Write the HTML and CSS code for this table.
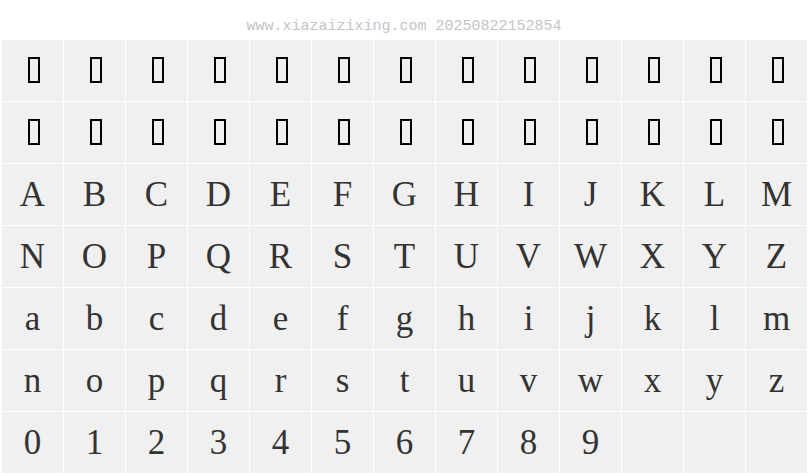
FILE: index.html
```html
<!DOCTYPE html>
<html>
    <head>
        <meta charset="UTF-8" />
        <meta name="viewport" content="width=device-width, initial-scale=1.0" />
        <title>Font Preview</title>
        <link rel="stylesheet" href="styles.css">
    </head>
    <body>
        <div class="stamp">www.xiazaizixing.com 20250822152854</div>

        <div class="charGrid">
            <!-- 缺字 -->
            <div class="cell"><span class="tofu"></span></div>
            <div class="cell"><span class="tofu"></span></div>
            <div class="cell"><span class="tofu"></span></div>
            <div class="cell"><span class="tofu"></span></div>
            <div class="cell"><span class="tofu"></span></div>
            <div class="cell"><span class="tofu"></span></div>
            <div class="cell"><span class="tofu"></span></div>
            <div class="cell"><span class="tofu"></span></div>
            <div class="cell"><span class="tofu"></span></div>
            <div class="cell"><span class="tofu"></span></div>
            <div class="cell"><span class="tofu"></span></div>
            <div class="cell"><span class="tofu"></span></div>
            <div class="cell"><span class="tofu"></span></div>
            <div class="cell"><span class="tofu"></span></div>
            <div class="cell"><span class="tofu"></span></div>
            <div class="cell"><span class="tofu"></span></div>
            <div class="cell"><span class="tofu"></span></div>
            <div class="cell"><span class="tofu"></span></div>
            <div class="cell"><span class="tofu"></span></div>
            <div class="cell"><span class="tofu"></span></div>
            <div class="cell"><span class="tofu"></span></div>
            <div class="cell"><span class="tofu"></span></div>
            <div class="cell"><span class="tofu"></span></div>
            <div class="cell"><span class="tofu"></span></div>
            <div class="cell"><span class="tofu"></span></div>
            <div class="cell"><span class="tofu"></span></div>

            <!-- 大寫 -->
            <div class="cell">A</div>
            <div class="cell">B</div>
            <div class="cell">C</div>
            <div class="cell">D</div>
            <div class="cell">E</div>
            <div class="cell">F</div>
            <div class="cell">G</div>
            <div class="cell">H</div>
            <div class="cell">I</div>
            <div class="cell">J</div>
            <div class="cell">K</div>
            <div class="cell">L</div>
            <div class="cell">M</div>
            <div class="cell">N</div>
            <div class="cell">O</div>
            <div class="cell">P</div>
            <div class="cell">Q</div>
            <div class="cell">R</div>
            <div class="cell">S</div>
            <div class="cell">T</div>
            <div class="cell">U</div>
            <div class="cell">V</div>
            <div class="cell">W</div>
            <div class="cell">X</div>
            <div class="cell">Y</div>
            <div class="cell">Z</div>

            <!-- 小寫 -->
            <div class="cell">a</div>
            <div class="cell">b</div>
            <div class="cell">c</div>
            <div class="cell">d</div>
            <div class="cell">e</div>
            <div class="cell">f</div>
            <div class="cell">g</div>
            <div class="cell">h</div>
            <div class="cell">i</div>
            <div class="cell">j</div>
            <div class="cell">k</div>
            <div class="cell">l</div>
            <div class="cell">m</div>
            <div class="cell">n</div>
            <div class="cell">o</div>
            <div class="cell">p</div>
            <div class="cell">q</div>
            <div class="cell">r</div>
            <div class="cell">s</div>
            <div class="cell">t</div>
            <div class="cell">u</div>
            <div class="cell">v</div>
            <div class="cell">w</div>
            <div class="cell">x</div>
            <div class="cell">y</div>
            <div class="cell">z</div>

            <!-- 數字 -->
            <div class="cell">0</div>
            <div class="cell">1</div>
            <div class="cell">2</div>
            <div class="cell">3</div>
            <div class="cell">4</div>
            <div class="cell">5</div>
            <div class="cell">6</div>
            <div class="cell">7</div>
            <div class="cell">8</div>
            <div class="cell">9</div>
            <div class="cell"></div>
            <div class="cell"></div>
            <div class="cell"></div>
        </div>
    </body>
</html>
```

FILE: styles.css
```css
/* 整體 */
*,
*::before,
*::after {
    box-sizing: border-box;
}

html,
body {
    margin: 0;
    padding: 0;
    background: #fff;
}

/* 頂部水印 */
.stamp {
    height: 40px;
    padding-top: 19px;
    text-align: center;
    font-family: "Liberation Mono", monospace;
    font-size: 15px;
    line-height: 15px;
    color: #c4c4c4;
}

/* 字元表格 */
.charGrid {
    display: grid;
    grid-template-columns: repeat(13, 61px);
    grid-auto-rows: 61px;
    gap: 1px;
    padding-left: 2px;
}

.cell {
    display: flex;
    justify-content: center;
    align-items: center;
    padding-top: 1px;
    background: #f0f0f0;
    font-family: "Liberation Serif", serif;
    font-size: 35px;
    color: #333;
}

/* 缺字方框 */
.tofu {
    display: block;
    width: 12px;
    height: 26px;
    margin: -3px 0 0 3px;
    border: 2px solid #000;
}
```
